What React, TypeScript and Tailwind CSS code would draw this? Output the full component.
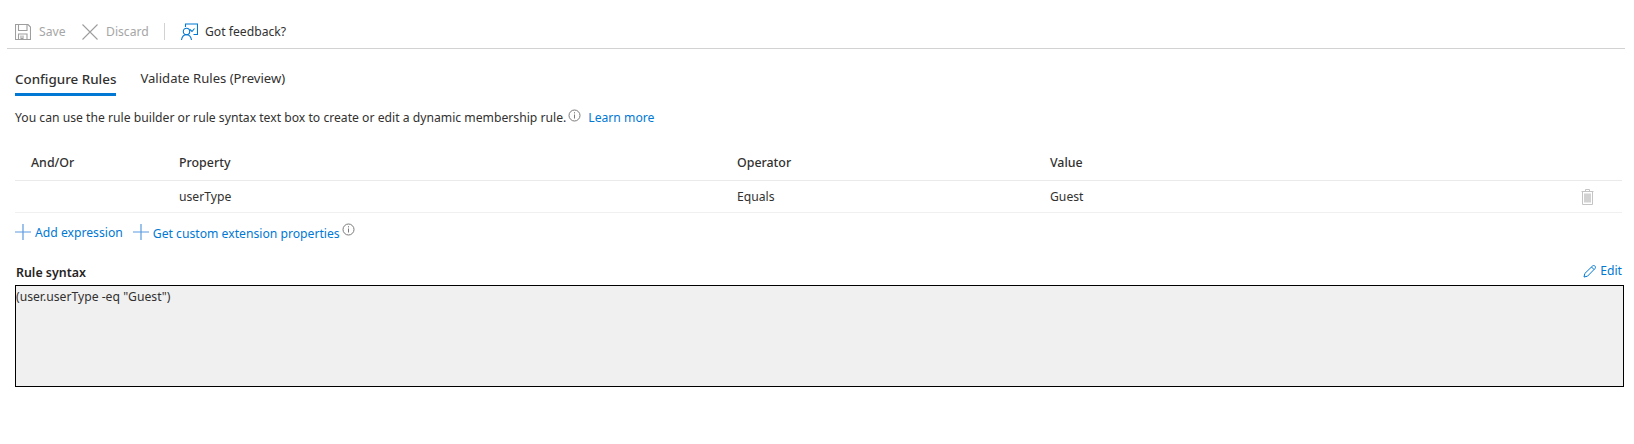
function Info() {
  return (
    <svg width="13" height="13" viewBox="0 0 13 13" fill="none" stroke="#7a7a7a" strokeWidth="1">
      <circle cx="6.5" cy="6.5" r="5.5" />
      <path d="M6.5 5.5V9.5M6.5 3.2V4.4" />
    </svg>
  );
}

function Plus() {
  return (
    <svg width="16" height="16" viewBox="0 0 16 16" stroke="#5b9be0" strokeWidth="1.2">
      <path d="M8 0V16M0 8H16" />
    </svg>
  );
}

export default function App() {
  return (
    <div className="h-[444px] w-[1634px] overflow-hidden bg-white font-['Noto_Sans',sans-serif] text-[12.18px] text-[#323130]">
      <div className="ml-[7px] mr-[9px] flex h-[49px] items-end border-b border-[#d2d2d2] pb-[7px] pl-[8px]">
        <div className="flex items-center">
          <svg width="16" height="16" viewBox="0 0 16 16" fill="none" stroke="#9e9e9e" strokeWidth="1.1">
            <path d="M.5.5H13L15.5 3V15.5H.5Z" />
            <path d="M3.5.5V6.5H12V.5M3.5 15.5V10H12V15.5M6 11.5V14.5H8V11.5" />
          </svg>
          <span className="ml-[8px] w-[27px] text-[#a6a6a6]">Save</span>
          <svg className="ml-[16px]" width="16" height="16" viewBox="0 0 16 16" stroke="#9e9e9e" strokeWidth="1.1">
            <path d="M.5.5L15.5 15.5M15.5.5L.5 15.5" />
          </svg>
          <span className="ml-[8px] w-[42px] text-[#a6a6a6]">Discard</span>
          <div className="ml-[16px] h-[17px] w-px bg-[#d2d2d2]" />
          <svg className="ml-[16px]" width="17" height="18" viewBox="0 0 17 18" fill="none" stroke="#0078d4" strokeWidth="1.1">
            <path d="M4.5 4V1H16.5V11.5H12.5" />
            <path d="M9 6.5L11 8.5L13.5 5.5" />
            <circle cx="5.5" cy="8.5" r="3.2" />
            <path d="M.5 17C1 13.5 3 11.8 5.5 11.8S10 13.5 10.5 17" />
          </svg>
          <span className="ml-[7px]">Got feedback?</span>
        </div>
      </div>

      <div className="ml-[15px] w-[1609px]">
        <div className="mt-[20px] flex gap-[24px] text-[13.1px]">
          <div className="h-[27px] border-b-[3px] border-[#0078d4] text-[13.4px] font-medium">Configure Rules</div>
          <div>Validate Rules (Preview)</div>
        </div>

        <div className="mt-[13px] flex h-[18px] items-center">
          <span>You can use the rule builder or rule syntax text box to create or edit a dynamic membership rule.</span>
          <span className="mb-[5px] ml-[2px]"><Info /></span>
          <span className="ml-[7px] text-[#0078d4]">Learn more</span>
        </div>

        <div className="mt-[19px] w-[1607px]">
          <div className="grid h-[35px] grid-cols-[164px_558px_313px_1fr] items-center border-b border-[#eaeaea] text-[12.4px] font-medium">
            <span className="pl-[16px]">And/Or</span>
            <span>Property</span>
            <span>Operator</span>
            <span>Value</span>
          </div>
          <div className="grid h-[32px] grid-cols-[164px_558px_313px_1fr_auto] items-center border-b border-[#eff0f0]">
            <span />
            <span className="pt-[2px]">userType</span>
            <span className="pt-[2px]">Equals</span>
            <span className="pt-[2px]">Guest</span>
            <svg className="mr-[28px]" width="13" height="16" viewBox="0 0 13 16" fill="none" stroke="#c4c4c4">
              <path d="M.5 2.5H12.5M4.5 2.5V.5H8.5V2.5M1.5 2.5V15.5H11.5V2.5" />
              <rect x="3" y="4.5" width="7" height="9" fill="#d2d2d2" stroke="none" />
            </svg>
          </div>
        </div>

        <div className="mt-[10px] flex h-[17px] items-center text-[#0078d4]">
          <Plus />
          <span className="ml-[4px] mt-[4px]">Add expression</span>
          <span className="ml-[10px]"><Plus /></span>
          <span className="ml-[4px] mt-[5px]">Get custom extension properties</span>
          <span className="mb-[4px] ml-[2px]"><Info /></span>
        </div>

        <div className="mt-[19px] flex h-[26px] items-start justify-between pr-[2px]">
          <span className="pl-px pt-[5px] text-[12.4px] font-semibold text-[#252423]">Rule syntax</span>
          <span className="flex items-center pt-[3px] text-[#0078d4]">
            <svg width="13" height="13" viewBox="0 0 13 13" fill="none" stroke="#0078d4">
              <path d="M1 12L1.8 8.5L9.5 1C10.3.3 11.3.4 11.9 1S12.7 2.8 12 3.5L4.5 11.2Z" />
              <path d="M8.5 2L11 4.5" />
            </svg>
            <span className="ml-[4px]">Edit</span>
          </span>
        </div>

        <div className="h-[102px] border border-black bg-[#f0f0f0] py-[2px]">
          (user.userType -eq "Guest")
        </div>
      </div>
    </div>
  );
}
